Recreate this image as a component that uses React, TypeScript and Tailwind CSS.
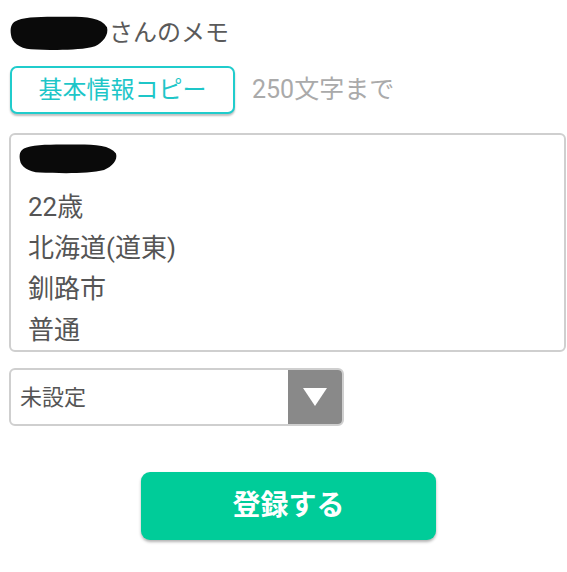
import React from 'react'

function Blot({ w, h }: { w: number; h: number }) {
  // hand-drawn black redaction mark
  return (
    <svg width={w} height={h} viewBox="0 0 100 40" preserveAspectRatio="none" className="shrink-0">
      <path
        d="M6 8 C14 2 40 3 60 3 C78 3 92 4 98 14 C100 22 94 30 86 34 C70 39 40 38 22 37 C10 36 3 30 2 22 C1 15 2 11 6 8 Z"
        fill="#0a0a0a"
      />
    </svg>
  )
}

export default function App() {
  const lines = ['22歳', '北海道(道東)', '釧路市', '普通']

  return (
    <div
      className="w-[567px] h-[572px] bg-white text-[#555] overflow-hidden"
      style={{ fontFamily: 'Roboto, "Noto Sans CJK JP", sans-serif' }}
    >
      <div className="flex items-center pl-[9px] pt-[14px] h-[52px]">
        <Blot w={100} h={38} />
        <span className="text-[24px] leading-none text-[#5a5a5a]">さんのメモ</span>
      </div>

      <div className="flex items-center mt-[14px] pl-[10px]">
        <button className="w-[225px] h-[48px] rounded-[7px] border-2 border-[#20cccc] bg-white text-[#1ec6c8] text-[24px] shadow-[0_2px_2px_rgba(0,0,0,0.25)] flex items-center justify-center">
          基本情報コピー
        </button>
        <span className="ml-[17px] text-[25px] text-[#aaa]">250文字まで</span>
      </div>

      <div className="mt-[19px] ml-[9px] w-[557px] h-[219px] border-2 border-[#cfcfcf] rounded-[6px] pl-[7px] pt-[7px]">
        <Blot w={100} h={33} />
        <div className="mt-[12px]">
          {lines.map((l) => (
            <div key={l} className="h-[41px] flex items-center pl-[10px] text-[26px] text-[#555]">
              {l}
            </div>
          ))}
        </div>
      </div>

      <div className="mt-[16px] ml-[9px] w-[335px] h-[58px] border-2 border-[#cfcfcf] rounded-[6px] flex overflow-hidden">
        <div className="flex-1 flex items-center pl-[9px] text-[22px] text-[#555]">未設定</div>
        <div className="w-[54px] bg-[#898989] flex items-center justify-center">
          <svg width="26" height="20" viewBox="0 0 26 20">
            <path d="M1 1 L25 1 L13 19 Z" fill="#fff" />
          </svg>
        </div>
      </div>

      <div className="flex justify-center mt-[46px] pl-[10px]">
        <button className="w-[295px] h-[68px] rounded-[9px] bg-[#00cc99] text-white text-[28px] font-bold shadow-[0_2px_3px_rgba(0,0,0,0.3)]">
          登録する
        </button>
      </div>
    </div>
  )
}
